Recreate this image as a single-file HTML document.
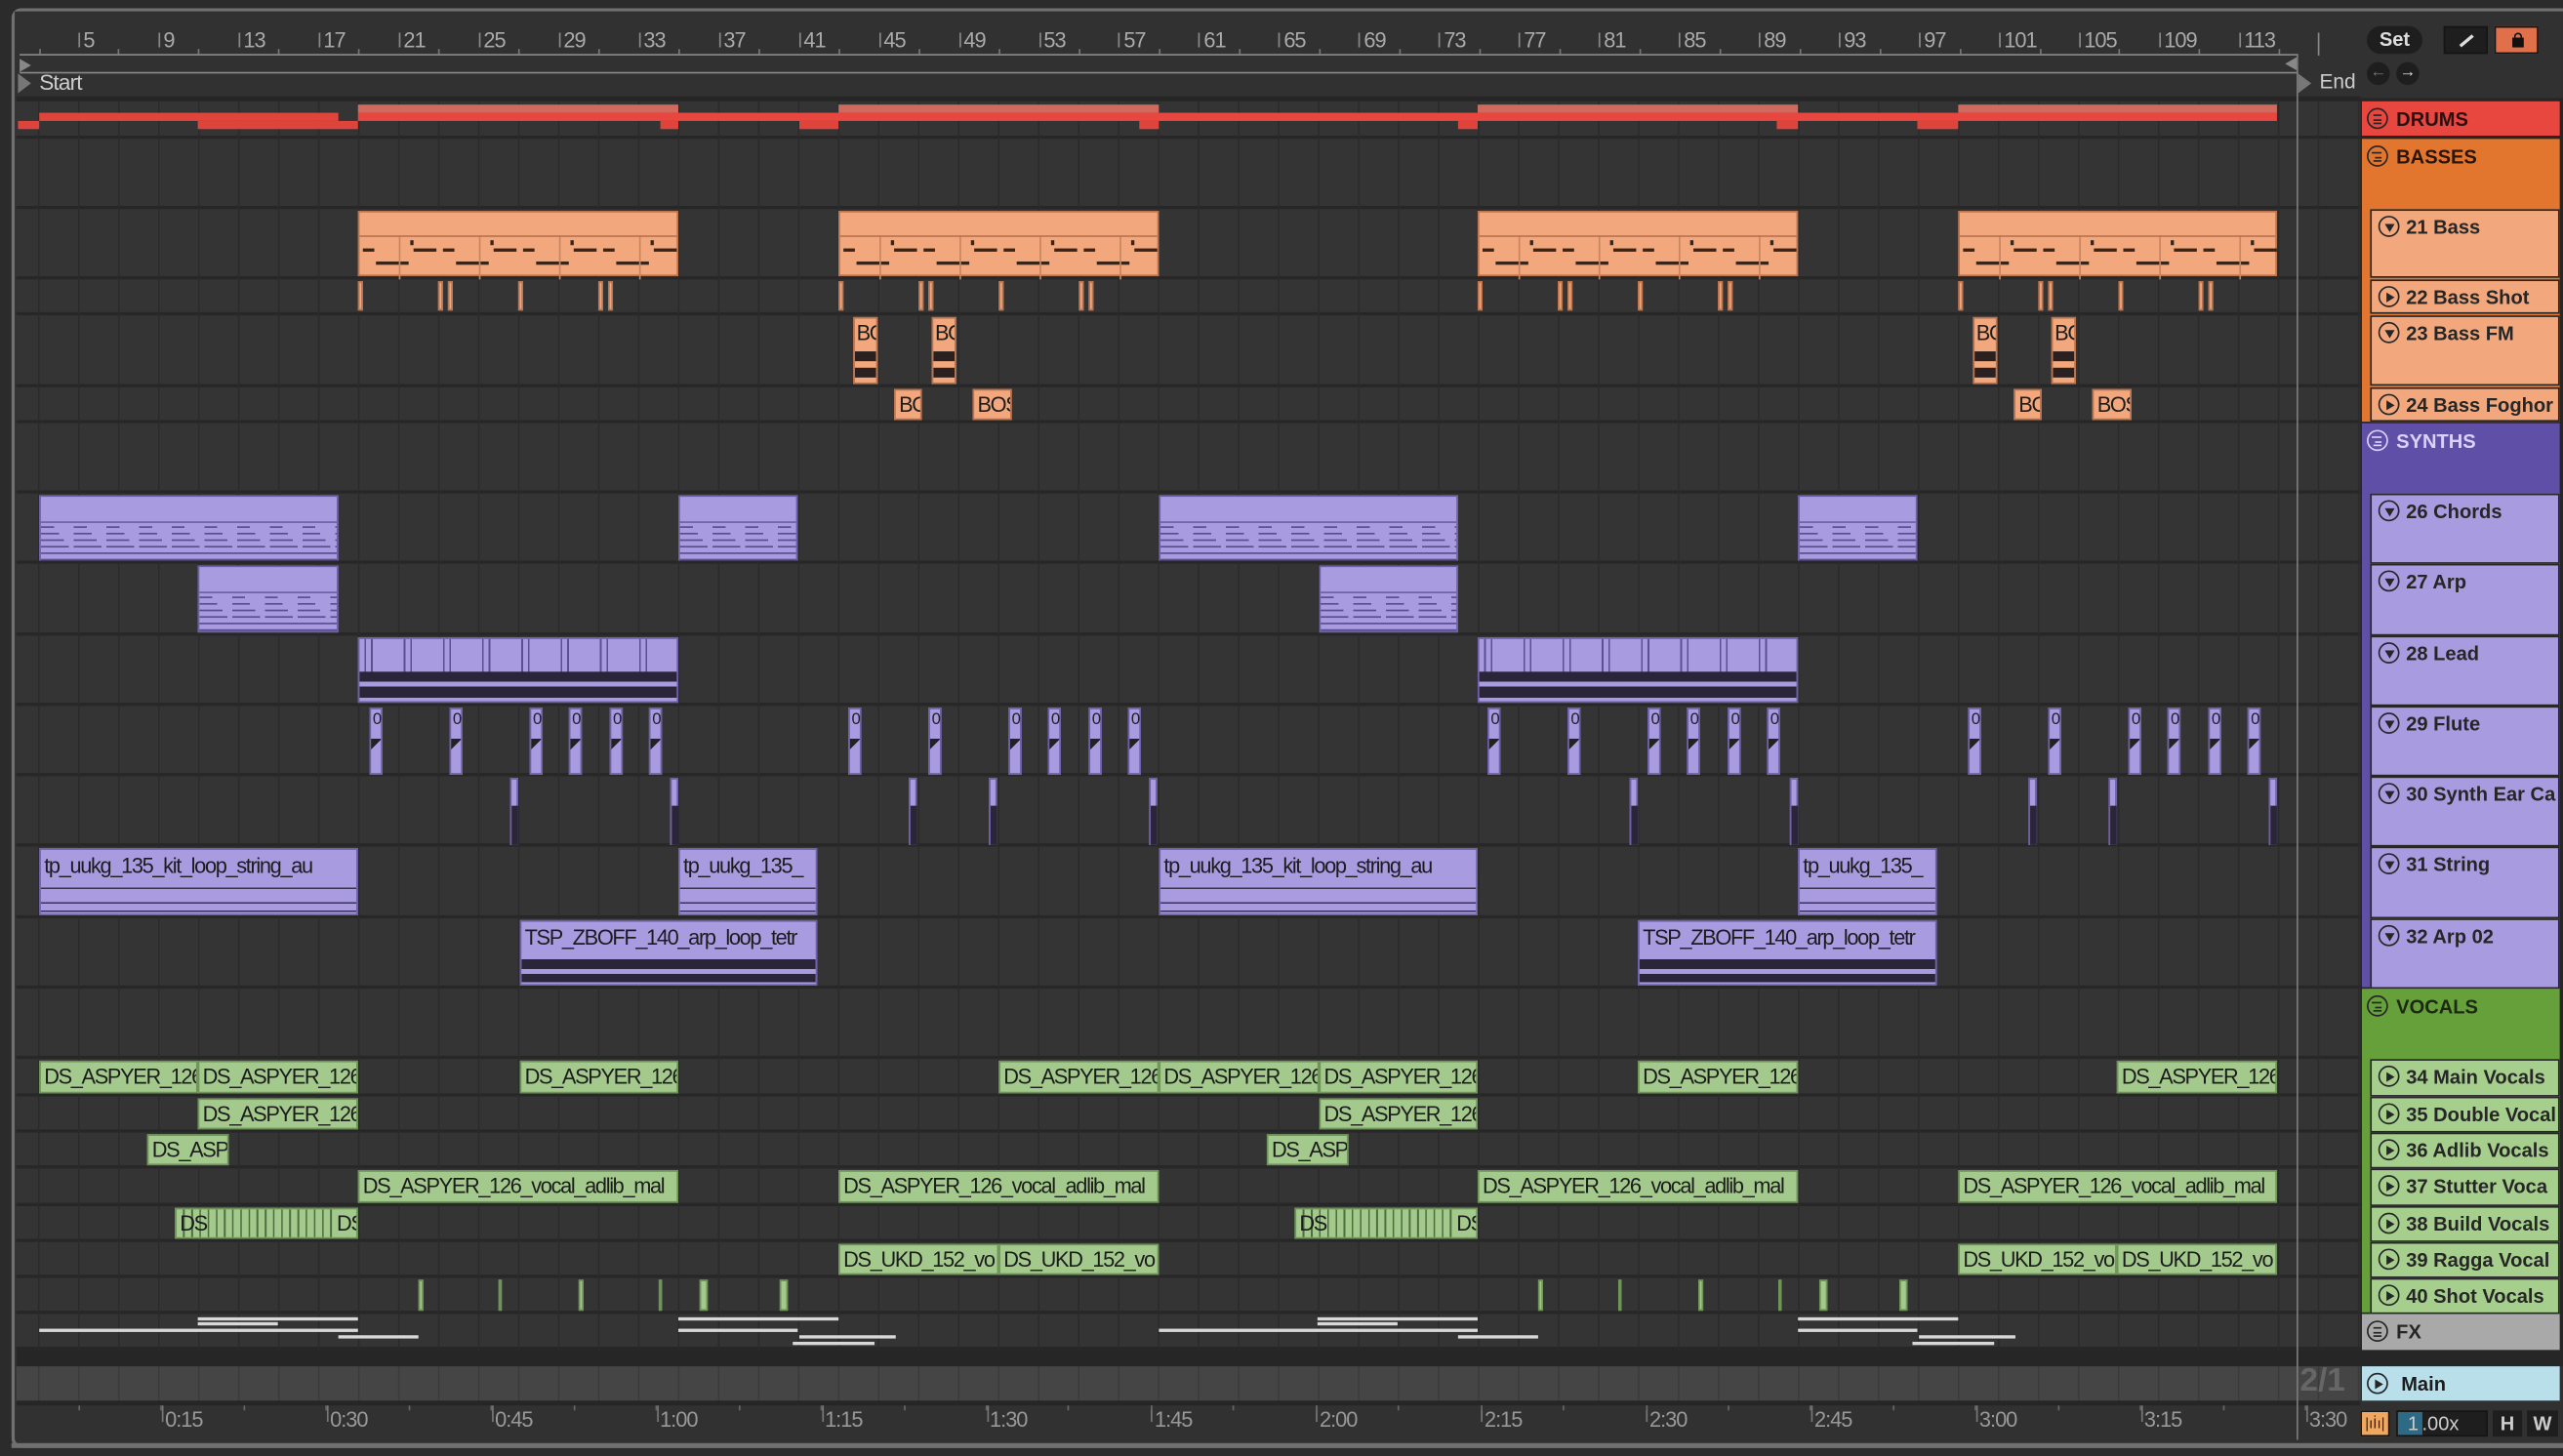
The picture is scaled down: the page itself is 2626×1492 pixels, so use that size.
<!DOCTYPE html>
<html><head><meta charset="utf-8">
<style>
*{margin:0;padding:0;box-sizing:border-box}
html,body{width:2626px;height:1492px;overflow:hidden;background:#1f1f1f}
#s{position:absolute;left:0;top:0;width:1568px;height:891px;transform:scale(1.67474);transform-origin:0 0;font-family:"Liberation Sans",sans-serif;background:#2b2b2b;overflow:hidden}
.a{position:absolute}
.row{position:absolute;left:10px;width:1434px;background:#343434;border-bottom:2px solid #272727}
.grid{position:absolute;left:10px;top:62px;width:1434px;height:764px;background-image:linear-gradient(to right,#2a2a2a 1px,transparent 1px);background-size:24.47px 100%;background-position:13.3px 0;pointer-events:none}
.cl{position:absolute;overflow:hidden;white-space:nowrap;font-size:13px;letter-spacing:-0.8px;color:#1c1c1c;line-height:17px;padding-left:2px}
.or{background:#f2a87c;border:1px solid #b97450}
.pu{background:#a99be0;border:1px solid #6e60a8}
.gr{background:#a3c98c;border:1px solid #6e9458}
.trk{position:absolute;left:1450px;width:116px;font-size:12px;font-weight:bold;color:#262626;padding-left:21px;line-height:15px;padding-top:3px;white-space:nowrap;overflow:hidden}
.grp{position:absolute;left:1445px;width:121px;font-size:12px;font-weight:bold;padding-left:21px;line-height:15px;padding-top:4px}
.ic{position:absolute;left:4px;top:3px;width:13px;height:13px;border:1.3px solid #262626;border-radius:50%}
.grp .ic{top:4px;left:3px}
.tri{position:absolute;left:3.5px;top:3px;width:0;height:0;border-left:5px solid #262626;border-top:3px solid transparent;border-bottom:3px solid transparent}
.trd{position:absolute;left:2.5px;top:4px;width:0;height:0;border-top:5px solid #262626;border-left:3.3px solid transparent;border-right:3.3px solid transparent}
.ln{position:absolute;left:3px;height:1.3px;background:#262626}
.rl{position:absolute;top:17px;font-size:13px;letter-spacing:-0.6px;color:#aaa}
.tk{position:absolute;top:20px;width:1px;height:9px;background:#888}
.tl{position:absolute;font-size:13px;letter-spacing:-0.6px;color:#999}
.bar{position:absolute;height:2.4px;background:#d8d8d8}
</style></head><body><div id="s">
<div class="a" style="left:7px;top:5px;width:1561px;height:881px;border:2px solid #707070;border-right:none;border-radius:6px 0 0 6px;background:#313131"></div>
<div class="a" style="left:9px;top:7px;width:1559px;height:55px;background:#313131"></div>
<div id="ruler"></div>
<div class="a" style="left:12px;top:33px;width:1394px;height:12px;border:1.5px solid #888;border-right:none;border-left:none"></div>
<div class="a" style="left:12px;top:36px;width:0;height:0;border-left:7px solid #888;border-top:4px solid transparent;border-bottom:4px solid transparent"></div>
<div class="a" style="left:1398px;top:35px;width:0;height:0;border-right:7px solid #888;border-top:4px solid transparent;border-bottom:4px solid transparent"></div>
<div class="a" style="left:11px;top:45px;width:0;height:0;border-left:8px solid #777;border-top:6px solid transparent;border-bottom:6px solid transparent"></div>
<div class="a" style="left:24px;top:43px;font-size:13.5px;letter-spacing:-0.5px;color:#ccc">Start</div>
<div class="a" style="left:1406px;top:45px;width:0;height:0;border-left:8px solid #777;border-top:6px solid transparent;border-bottom:6px solid transparent"></div>
<div class="a" style="left:1419px;top:43px;font-size:12.5px;color:#ccc">End</div>
<div class="a" style="left:10px;top:59px;width:1434px;height:3px;background:#262626"></div>
<div id="rows"></div>
<div class="grid"></div>
<div class="a" style="left:10px;top:826px;width:1434px;height:10px;background:#262626"></div>
<div class="a" style="left:10px;top:836px;width:1434px;height:22px;background:#454545;background-image:linear-gradient(to right,#3a3a3a 1px,transparent 1px);background-size:24.47px 100%;background-position:13.3px 0"></div>
<div class="a" style="left:10px;top:857px;width:1434px;height:3px;background:#262626"></div>
<div class="a" style="left:1405px;top:33px;width:1.3px;height:848px;background:#7a7a7a"></div>
<div class="a" style="left:1407px;top:834px;font-size:20px;font-weight:bold;color:#666">2/1</div>
<div id="clips"></div>
<div class="cl gr" style="left:24px;top:649px;width:97px;height:20px">DS_ASPYER_126</div>
<div class="cl gr" style="left:121px;top:649px;width:98px;height:20px">DS_ASPYER_126</div>
<div class="cl gr" style="left:318px;top:649px;width:97px;height:20px">DS_ASPYER_126</div>
<div class="cl gr" style="left:611px;top:649px;width:98px;height:20px">DS_ASPYER_126</div>
<div class="cl gr" style="left:709px;top:649px;width:98px;height:20px">DS_ASPYER_126</div>
<div class="cl gr" style="left:807px;top:649px;width:97px;height:20px">DS_ASPYER_126</div>
<div class="cl gr" style="left:1002px;top:649px;width:98px;height:20px">DS_ASPYER_126</div>
<div class="cl gr" style="left:1295px;top:649px;width:98px;height:20px">DS_ASPYER_126</div>
<div class="cl gr" style="left:121px;top:672px;width:98px;height:19px">DS_ASPYER_126</div>
<div class="cl gr" style="left:807px;top:672px;width:97px;height:19px">DS_ASPYER_126</div>
<div class="cl gr" style="left:90px;top:694px;width:50px;height:19px">DS_ASP</div>
<div class="cl gr" style="left:775px;top:694px;width:50px;height:19px">DS_ASP</div>
<div class="cl gr" style="left:219px;top:716px;width:196px;height:20px">DS_ASPYER_126_vocal_adlib_mal</div>
<div class="cl gr" style="left:513px;top:716px;width:196px;height:20px">DS_ASPYER_126_vocal_adlib_mal</div>
<div class="cl gr" style="left:904px;top:716px;width:196px;height:20px">DS_ASPYER_126_vocal_adlib_mal</div>
<div class="cl gr" style="left:1198px;top:716px;width:195px;height:20px">DS_ASPYER_126_vocal_adlib_mal</div>
<div class="cl gr" style="left:107px;top:739px;width:112px;height:19px;background-image:repeating-linear-gradient(to right,#4d6e3e 0 1px,transparent 1px 5px);background-position:14px 0">DS<span style="position:absolute;left:98px;background:#a3c98c">DS</span></div>
<div class="cl gr" style="left:792px;top:739px;width:112px;height:19px;background-image:repeating-linear-gradient(to right,#4d6e3e 0 1px,transparent 1px 5px);background-position:14px 0">DS<span style="position:absolute;left:98px;background:#a3c98c">DS</span></div>
<div class="cl gr" style="left:513px;top:761px;width:98px;height:19px">DS_UKD_152_vo</div>
<div class="cl gr" style="left:611px;top:761px;width:98px;height:19px">DS_UKD_152_vo</div>
<div class="cl gr" style="left:1198px;top:761px;width:97px;height:19px">DS_UKD_152_vo</div>
<div class="cl gr" style="left:1295px;top:761px;width:98px;height:19px">DS_UKD_152_vo</div>
<div class="cl pu" style="left:24px;top:519px;width:195px;height:41px;padding-top:1px">tp_uukg_135_kit_loop_string_au<div class="a" style="left:0;top:19px;width:100%;height:21px;background:repeating-linear-gradient(#a99be0 0 4px,#3a3350 4px 5px,#a99be0 5px 13px,#3a3350 13px 14px,#a99be0 14px)"></div></div>
<div class="cl pu" style="left:415px;top:519px;width:85px;height:41px;padding-top:1px">tp_uukg_135_<div class="a" style="left:0;top:19px;width:100%;height:21px;background:repeating-linear-gradient(#a99be0 0 4px,#3a3350 4px 5px,#a99be0 5px 13px,#3a3350 13px 14px,#a99be0 14px)"></div></div>
<div class="cl pu" style="left:709px;top:519px;width:195px;height:41px;padding-top:1px">tp_uukg_135_kit_loop_string_au<div class="a" style="left:0;top:19px;width:100%;height:21px;background:repeating-linear-gradient(#a99be0 0 4px,#3a3350 4px 5px,#a99be0 5px 13px,#3a3350 13px 14px,#a99be0 14px)"></div></div>
<div class="cl pu" style="left:1100px;top:519px;width:85px;height:41px;padding-top:1px">tp_uukg_135_<div class="a" style="left:0;top:19px;width:100%;height:21px;background:repeating-linear-gradient(#a99be0 0 4px,#3a3350 4px 5px,#a99be0 5px 13px,#3a3350 13px 14px,#a99be0 14px)"></div></div>
<div class="cl pu" style="left:318px;top:563px;width:182px;height:40px;padding-top:1px">TSP_ZBOFF_140_arp_loop_tetr<div class="a" style="left:0;top:20px;width:100%;height:19px;background:linear-gradient(#a99be0 0 3px,#2a2538 3px 9px,#a99be0 9px 12px,#2a2538 12px 17px,#a99be0 17px)"></div></div>
<div class="cl pu" style="left:1002px;top:563px;width:183px;height:40px;padding-top:1px">TSP_ZBOFF_140_arp_loop_tetr<div class="a" style="left:0;top:20px;width:100%;height:19px;background:linear-gradient(#a99be0 0 3px,#2a2538 3px 9px,#a99be0 9px 12px,#2a2538 12px 17px,#a99be0 17px)"></div></div>
<div class="cl or" style="left:522px;top:194px;width:15px;height:41px;padding-left:1px">BO<div class="a" style="left:0;top:20px;width:100%;height:6px;background:#2a2020"></div><div class="a" style="left:0;top:30px;width:100%;height:6px;background:#2a2020"></div></div>
<div class="cl or" style="left:570px;top:194px;width:15px;height:41px;padding-left:1px">BO<div class="a" style="left:0;top:20px;width:100%;height:6px;background:#2a2020"></div><div class="a" style="left:0;top:30px;width:100%;height:6px;background:#2a2020"></div></div>
<div class="cl or" style="left:1207px;top:194px;width:15px;height:41px;padding-left:1px">BO<div class="a" style="left:0;top:20px;width:100%;height:6px;background:#2a2020"></div><div class="a" style="left:0;top:30px;width:100%;height:6px;background:#2a2020"></div></div>
<div class="cl or" style="left:1255px;top:194px;width:15px;height:41px;padding-left:1px">BO<div class="a" style="left:0;top:20px;width:100%;height:6px;background:#2a2020"></div><div class="a" style="left:0;top:30px;width:100%;height:6px;background:#2a2020"></div></div>
<div class="cl or" style="left:547px;top:238px;width:17px;height:19px">BO</div>
<div class="cl or" style="left:595px;top:238px;width:24px;height:19px">BOS</div>
<div class="cl or" style="left:1232px;top:238px;width:17px;height:19px">BO</div>
<div class="cl or" style="left:1280px;top:238px;width:24px;height:19px">BOS</div>
<div class="a" style="left:1444px;top:60px;width:124px;height:776px;background:#262626"></div>
<div class="grp" style="top:62px;height:21px;background:#e8473f;color:#2a1010"><div class="ic"><div class="ln" style="top:3px;width:5px;left:3px"></div><div class="ln" style="top:5.5px;width:5px;left:3px"></div><div class="ln" style="top:8px;width:5px;left:3px"></div></div>DRUMS</div>
<div class="grp" style="top:85px;height:173px;background:#e3762f;color:#2a1508"><div class="ic"><div class="ln" style="top:3px;width:6px;left:2px"></div><div class="ln" style="top:5.5px;width:4px;left:4px"></div><div class="ln" style="top:8px;width:5px;left:3px"></div></div>BASSES</div>
<div class="trk" style="top:128px;height:42px;background:#f2a87c;border:1px solid #262626"><div class="ic"><div class="trd"></div></div>21 Bass</div>
<div class="trk" style="top:171px;height:21px;background:#f2a87c;border:1px solid #262626"><div class="ic"><div class="tri"></div></div>22 Bass Shot</div>
<div class="trk" style="top:193px;height:43px;background:#f2a87c;border:1px solid #262626"><div class="ic"><div class="trd"></div></div>23 Bass FM</div>
<div class="trk" style="top:237px;height:21px;background:#f2a87c;border:1px solid #262626"><div class="ic"><div class="tri"></div></div>24 Bass Foghor</div>
<div class="grp" style="top:259px;height:345px;background:#5f4fa6;color:#d9d2fa"><div class="ic" style="border-color:#d9d2fa"><div class="ln" style="top:3px;width:6px;left:2px;background:#d9d2fa"></div><div class="ln" style="top:5.5px;width:4px;left:4px;background:#d9d2fa"></div><div class="ln" style="top:8px;width:5px;left:3px;background:#d9d2fa"></div></div>SYNTHS</div>
<div id="syn"></div>
<div class="grp" style="top:605px;height:198px;background:#65a03b;color:#1c2a12"><div class="ic"><div class="ln" style="top:3px;width:6px;left:2px"></div><div class="ln" style="top:5.5px;width:4px;left:4px"></div><div class="ln" style="top:8px;width:5px;left:3px"></div></div>VOCALS</div>
<div id="voc"></div>
<div class="grp" style="top:804px;height:22px;background:#a9a9a9;color:#262626"><div class="ic"><div class="ln" style="top:3px;width:5px;left:3px"></div><div class="ln" style="top:5.5px;width:5px;left:3px"></div><div class="ln" style="top:8px;width:5px;left:3px"></div></div>FX</div>
<div class="grp" style="top:836px;height:21px;background:#b9dfea;color:#1c1c1c;padding-left:24px"><div class="ic"><div class="tri"></div></div>Main</div>
<div class="a" style="left:1448px;top:16px;width:34px;height:17px;border-radius:9px;background:#1e1e1e;color:#ddd;font-size:12px;text-align:center;line-height:17px;font-weight:bold">Set</div>
<div class="a" style="left:1495px;top:16px;width:27px;height:17px;background:#1e1e1e;border:1px solid #151515"><div class="a" style="left:8px;top:7px;width:10px;height:2px;background:#ddd;transform:rotate(-40deg)"></div></div>
<div class="a" style="left:1526px;top:16px;width:27px;height:17px;background:#e0704a;border:1px solid #151515"><div class="a" style="left:10px;top:6px;width:7px;height:6px;background:#111"></div><div class="a" style="left:11px;top:3px;width:5px;height:5px;border:1.3px solid #111;border-bottom:none;border-radius:3px 3px 0 0"></div></div>
<div class="a" style="left:1448px;top:38px;width:14px;height:14px;border-radius:50%;background:#1e1e1e;color:#777;font-size:10px;text-align:center;line-height:14px">&#8592;</div>
<div class="a" style="left:1466px;top:38px;width:14px;height:14px;border-radius:50%;background:#1e1e1e;color:#ddd;font-size:10px;text-align:center;line-height:14px">&#8594;</div>
<div class="a" style="left:1444px;top:863px;width:18px;height:16px;background:#f0a860;border:1px solid #151515;color:#222;font-size:9px;text-align:center;line-height:14px">|ıİı|</div>
<div class="a" style="left:1466px;top:863px;width:56px;height:16px;background:#1e1e1e;border:1px solid #151515;font-size:12px;color:#ccc;line-height:14px"><span style="background:#2d6a86;padding:0 2px 0 6px">1</span>.00x</div>
<div class="a" style="left:1525px;top:863px;width:18px;height:16px;background:#1e1e1e;color:#ccc;font-size:12px;text-align:center;line-height:16px;font-weight:bold">H</div>
<div class="a" style="left:1546px;top:863px;width:19px;height:16px;background:#1e1e1e;color:#ccc;font-size:12px;text-align:center;line-height:16px;font-weight:bold">W</div>
<div class="a" style="left:7px;top:883px;width:1561px;height:3px;background:#707070"></div>
<div id="times"></div>
</div>
<script>
function A(p,h){document.getElementById(p).insertAdjacentHTML('beforeend',h)}
for(let n=5;n<=113;n+=4){let x=48+(n-5)*12.24;A('ruler',`<div class="tk" style="left:${x}px"></div><div class="rl" style="left:${x+3}px">${n}</div>`)}
A('ruler',`<div class="tk" style="left:1418px;height:14px"></div>`);
for(let n=3;n<=115;n+=4){let x=48+(n-5)*12.24;A('ruler',`<div class="a" style="left:${x}px;top:30px;width:1px;height:3px;background:#777"></div>`)}
const R=[[62,23],[85,43],[128,43],[171,22],[193,44],[237,22],[259,43],[302,43],[345,44],[389,43],[432,43],[475,43],[518,44],[562,43],[605,43],[648,23],[671,22],[693,22],[715,23],[738,22],[760,22],[782,22],[804,22]];
R.forEach(r=>A('rows',`<div class="row" style="top:${r[0]}px;height:${r[1]}px"></div>`));
const dc=(x1,x2,y,h,c)=>A('clips',`<div class="a" style="left:${x1}px;top:${y}px;width:${x2-x1}px;height:${h}px;background:${c}"></div>`);
[[219,415],[513,709],[904,1100],[1198,1393]].forEach(s=>dc(s[0],s[1],64,5,'#d06a5e'));
dc(24,207,69,5,'#e0453c');dc(219,1393,69,5,'#e8473f');
[[11,24],[121,219],[404,415],[489,513],[697,709],[892,904],[1087,1100],[1173,1198]].forEach(s=>dc(s[0],s[1],74,5,'#df443c'));
const S=[219,513,904,1198];
S.forEach(s=>{let w=(s==1198?195:196);
 let notes='';for(let k=0;k<4;k++){let b=k*49;notes+=`<div class="a" style="left:${b+2}px;top:22px;width:7px;height:2px;background:#3a2418"></div><div class="a" style="left:${b+33}px;top:22px;width:14px;height:2px;background:#3a2418"></div><div class="a" style="left:${b+10}px;top:30px;width:20px;height:2px;background:#3a2418"></div><div class="a" style="left:${b+31}px;top:17px;width:2px;height:3px;background:#3a2418"></div><div class="a" style="left:${b+24}px;top:14px;width:1px;height:27px;background:#c98560"></div>`}
 A('clips',`<div class="a or" style="left:${s}px;top:129px;width:${w}px;height:40px">${notes}<div class="a" style="left:0;top:14px;width:100%;height:1px;background:#b97450"></div></div>`);
 [0,49,55,98,147,153].forEach(o=>A('clips',`<div class="a" style="left:${s+o}px;top:172px;width:2.5px;height:18px;background:#f2a87c;border:0.5px solid #b97450"></div>`));
});
const pc=(x,y,w,h,extra)=>A('clips',`<div class="a pu" style="left:${x}px;top:${y}px;width:${w}px;height:${h}px">${extra||''}</div>`);
const mid=()=>{let s='<div class="a" style="left:0;top:15px;width:100%;height:1px;background:#6e60a8"></div>';for(let i=0;i<6;i++)s+=`<div class="a" style="left:0;top:${18+i*4}px;width:100%;height:1px;background:repeating-linear-gradient(to right,#5a4d90 0 ${8+i*3}px,transparent ${8+i*3}px 20px)"></div>`;return s};
[[24,183],[415,73],[709,183],[1100,73]].forEach(c=>pc(c[0],303,c[1],40,mid()));
[[121,86],[807,85]].forEach(c=>pc(c[0],346,c[1],41,mid()));
[219,904].forEach(x=>pc(x,390,196,40,'<div class="a" style="left:0;top:0;width:100%;height:100%;background:repeating-linear-gradient(to right,transparent 0 3px,#5d5090 3px 4px,transparent 4px 7px,#5d5090 7px 8px,transparent 8px 24px)"></div><div class="a" style="left:0;top:20px;width:100%;height:18px;background:linear-gradient(#2a2538 0 6px,#a99be0 6px 9px,#2a2538 9px 16px,#a99be0 16px)"></div>'));
[0,49,98,122,147,171].forEach(o=>[226,519,910,1204].forEach(b=>pc(b+o,433,8,41,'<div class="a" style="left:1px;top:1px;font-size:10px;color:#222">0</div><div class="a" style="left:0;top:18px;width:6px;height:16px;background:linear-gradient(135deg,#222 30%,transparent 30%)"></div>')));
[312,410,556,605,703,997,1095,1241,1290,1388].forEach(x=>pc(x,476,5,41,'<div class="a" style="left:0;top:16px;width:4px;height:24px;background:#2a2538"></div>'));
[[256,3],[305,1],[354,3],[403,1],[428,5],[477,5],[941,3],[990,1],[1039,3],[1088,1],[1113,5],[1162,5]].forEach(v=>A('clips',`<div class="a" style="left:${v[0]}px;top:783px;width:${v[1]}px;height:19px;background:#a3c98c;border:0.5px solid #6e9458"></div>`));
[[121,219,806],[121,170,809],[24,219,813],[207,256,817],[415,513,806],[415,488,813],[489,548,817],[485,535,821]].forEach(b=>{[0,685].forEach(o=>A('clips',`<div class="bar" style="left:${b[0]+o}px;top:${b[2]}px;width:${b[1]-b[0]}px"></div>`))});
const tr=(id,y,h,name,down,bg)=>A(id,`<div class="trk" style="top:${y}px;height:${h}px;background:${bg};border:1px solid #262626"><div class="ic"><div class="${down?'trd':'tri'}"></div></div>${name}</div>`);
[[302,43,'26 Chords'],[345,44,'27 Arp'],[389,43,'28 Lead'],[432,43,'29 Flute'],[475,43,'30 Synth Ear Ca'],[518,44,'31 String'],[562,43,'32 Arp 02']].forEach(t=>tr('syn',t[0],t[1],t[2],1,'#a99be0'));
[[648,23,'34 Main Vocals'],[671,22,'35 Double Vocal'],[693,22,'36 Adlib Vocals'],[715,23,'37 Stutter Voca'],[738,22,'38 Build Vocals'],[760,22,'39 Ragga Vocal'],[782,22,'40 Shot Vocals']].forEach(t=>tr('voc',t[0],t[1],t[2],0,'#a6cf8e'));
['0:15','0:30','0:45','1:00','1:15','1:30','1:45','2:00','2:15','2:30','2:45','3:00','3:15','3:30'].forEach((t,i)=>{let x=99+i*100.9;A('times',`<div class="a" style="left:${x}px;top:860px;width:1px;height:10px;background:#777"></div><div class="tl" style="left:${x+2}px;top:861px">${t}</div>`)});
for(let i=0;i<28;i++){let x=48+i*50.45;A('times',`<div class="a" style="left:${x}px;top:860px;width:1px;height:3px;background:#666"></div>`)}
</script>
</body></html>
